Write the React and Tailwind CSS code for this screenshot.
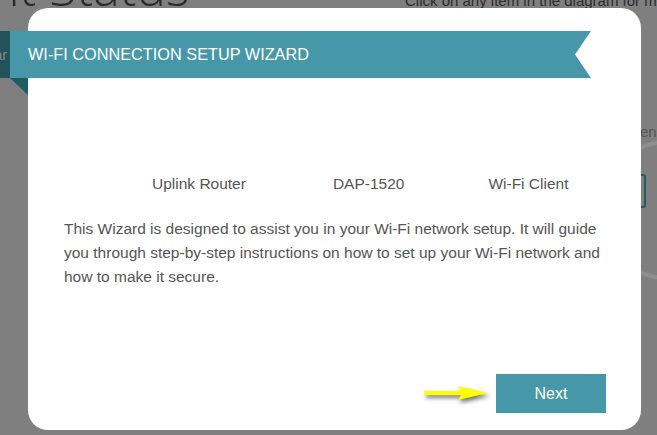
export default function App() {
  return (
    <div
      className="relative w-[657px] h-[435px] overflow-hidden bg-[#7f7f7f]"
      style={{ fontFamily: '"Liberation Sans", Arial, sans-serif' }}
    >
      {/* dimmed background page */}
      <div className="absolute left-[-10px] top-[-38px] text-[50px] font-light text-[#2a2a2a] leading-none whitespace-nowrap" style={{ fontFamily: '"Open Sans", sans-serif' }}>
        nt Status
      </div>
      <div className="absolute left-[405px] top-[-10px] text-[15px] text-[#2b2b2b] whitespace-nowrap">
        Click on any item in the diagram for more
      </div>
      <div className="absolute left-0 top-[31px] w-[10px] h-[47px] bg-[#22525a] overflow-hidden">
        <span className="absolute left-[-6px] top-[13px] text-[15px] text-[#7a8a8c]">ar</span>
      </div>
      <div className="absolute left-[640px] top-[121px] text-[15px] text-[#555]">en</div>
      <div className="absolute left-[598px] top-[140px] w-[140px] h-[140px] rounded-full border-[4px] border-[#8e8e8e]" />
      <div className="absolute left-[620px] top-[174px] w-[26px] h-[34px] rounded-[3px] border-[2px] border-[#1f5e63]" />

      {/* modal */}
      <div className="absolute left-[28px] top-[8px] w-[613px] h-[422px] rounded-[20px] bg-white flex flex-col">
        <div className="relative mt-[23px] -ml-[18px] w-[581px] h-[47px]">
          <div
            className="w-full h-full bg-[#4698a9] flex items-center pl-[18px]"
            style={{ clipPath: 'polygon(0 0, 100% 0, calc(100% - 16px) 50%, 100% 100%, 0 100%)' }}
          >
            <span className="text-white text-[16.3px] leading-none whitespace-nowrap">WI-FI CONNECTION SETUP WIZARD</span>
          </div>
          <div
            className="absolute left-0 top-full w-[18px] h-[17px] bg-[#1b5e63]"
            style={{ clipPath: 'polygon(0 0, 100% 0, 100% 100%)' }}
          />
        </div>

        <div className="flex mt-[97px] text-[15.5px] text-[#555] leading-[18px] whitespace-nowrap">
          <span className="ml-[124px]">Uplink Router</span>
          <span className="ml-[87px]">DAP-1520</span>
          <span className="ml-[84px]">Wi-Fi Client</span>
        </div>

        <p className="mt-[24px] px-[36px] text-[15.5px] leading-[24px] text-[#555]">
          This Wizard is designed to assist you in your Wi-Fi network setup. It will guide you through step-by-step instructions on how to set up your Wi-Fi network and how to make it secure.
        </p>

        <div className="mt-auto mb-[17px] mr-[35px] flex items-center justify-end">
          <svg width="70" height="24" viewBox="0 0 70 24" className="mr-[4px]" style={{ filter: 'drop-shadow(2px 3px 2px rgba(0,0,0,0.55))' }}>
            <rect x="2" y="9" width="38" height="4" fill="#ffff00" />
            <polygon points="36,4 66,11 36,18 40,11" fill="#ffff00" />
          </svg>
          <button className="w-[110px] h-[39px] bg-[#4698a9] text-white text-[16px] pt-[1px]">Next</button>
        </div>
      </div>
    </div>
  );
}
